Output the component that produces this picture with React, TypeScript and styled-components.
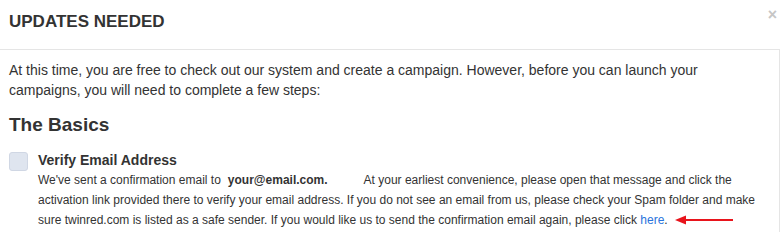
import React from 'react';
import styled, { createGlobalStyle } from 'styled-components';

const GlobalStyle = createGlobalStyle`
  body {
    margin: 0;
    background: #fff;
    font-family: 'Liberation Sans', Helvetica, Arial, sans-serif;
    color: #333;
  }
`;

const Modal = styled.div`
  width: 780px;
  height: 232px;
  display: flex;
  flex-direction: column;
  overflow: hidden;
`;

const Header = styled.header`
  height: 49px;
  flex-shrink: 0;
  display: flex;
  justify-content: space-between;
  align-items: flex-start;
  padding: 0 3px 0 9px;
  border-bottom: 1px solid #e5e5e5;
`;

const Title = styled.h4`
  margin: 12px 0 0;
  font-size: 17px;
  font-weight: 700;
  color: #333;
`;

const Close = styled.button`
  margin-top: 7px;
  padding: 0;
  border: 0;
  background: none;
  color: #c6c6c6;
  font-family: 'Liberation Sans', Arial, sans-serif;
  font-size: 16px;
  font-weight: 700;
  line-height: 1;
  cursor: pointer;
`;

const Body = styled.section`
  flex: 1;
  padding: 10px 9px 0 9px;
  border-right: 1px solid #e5e5e5;
`;

const Intro = styled.p`
  margin: 0;
  font-size: 14px;
  line-height: 20px;
`;

const SectionTitle = styled.h3`
  margin: 14px 0 15px;
  font-size: 19px;
  font-weight: 700;
  color: #333;
`;

const Step = styled.div`
  display: flex;
  gap: 10px;
  align-items: flex-start;
`;

const Checkbox = styled.span`
  flex-shrink: 0;
  width: 19px;
  height: 19px;
  margin-top: 1px;
  box-sizing: border-box;
  background: #dfe5ef;
  border: 1px solid #d0d7e4;
  border-radius: 3px;
`;

const StepContent = styled.div`
  flex: 1;
`;

const StepTitle = styled.div`
  font-size: 14px;
  font-weight: 700;
  line-height: 18px;
  margin-bottom: 1px;
`;

const StepText = styled.p`
  margin: 0;
  font-size: 12px;
  line-height: 20px;
`;

const Email = styled.strong`
  margin: 0 36px 0 7px;
  font-size: 12px;
`;

const Link = styled.a`
  color: #2a74dc;
  text-decoration: none;
`;

const Arrow = styled.svg`
  margin-left: 7px;
  vertical-align: -1px;
`;

export default function App() {
  return (
    <>
      <GlobalStyle />
      <Modal>
        <Header>
          <Title>UPDATES NEEDED</Title>
          <Close aria-label="Close">×</Close>
        </Header>
        <Body>
          <Intro>
            At this time, you are free to check out our system and create a campaign. However,
            before you can launch your campaigns, you will need to complete a few steps:
          </Intro>
          <SectionTitle>The Basics</SectionTitle>
          <Step>
            <Checkbox />
            <StepContent>
              <StepTitle>Verify Email Address</StepTitle>
              <StepText>
                We've sent a confirmation email to<Email>your@email.com.</Email>At your earliest
                convenience, please open that message and click the activation link provided there
                to verify your email address. If you do not see an email from us, please check your
                Spam folder and make sure twinred.com is listed as a safe sender. If you would like
                us to send the confirmation email again, please click <Link href="#">here</Link>.
                <Arrow width="58" height="10" viewBox="0 0 58 10">
                  <line x1="8" y1="5" x2="58" y2="5" stroke="#e8141c" strokeWidth="2" />
                  <polygon points="0,5 11,0.5 11,9.5" fill="#e8141c" />
                </Arrow>
              </StepText>
            </StepContent>
          </Step>
        </Body>
      </Modal>
    </>
  );
}
